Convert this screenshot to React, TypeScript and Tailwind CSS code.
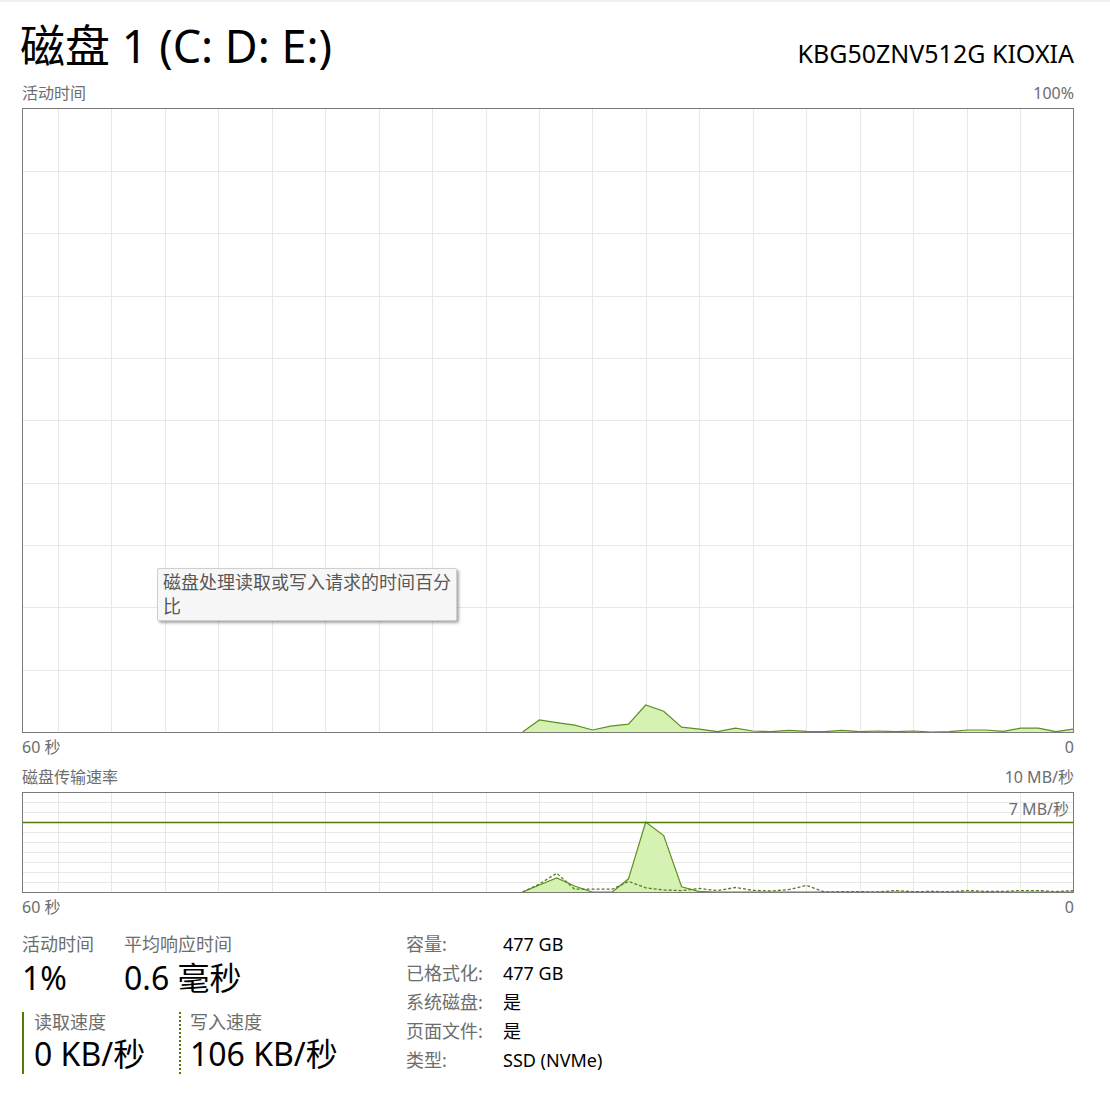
import React from "react";

type Pt = [number, number];

// x in page px, value = px above the chart floor
const activity: Pt[] = [
  [522.6, 0], [539.4, 12], [556.7, 9.3], [574.6, 6.9], [592.6, 2], [610.5, 5.9],
  [628.5, 7.9], [645.7, 27], [663.7, 20.7], [681.6, 4.8], [699.6, 2.8], [717.5, 0.3],
  [735.5, 3.8], [752.7, 1], [770.7, 0.3], [788.6, 1.7], [806.6, 0.7], [824.5, 0.3],
  [841.8, 1.7], [859.7, 0.3], [877.7, 1], [895.6, 0.3], [913.6, 1], [931.5, 0],
  [949.5, 0.3], [967.4, 2], [985.4, 2], [1003.4, 0.7], [1020.6, 3.8], [1038.5, 3.8],
  [1055.8, 0.3], [1073, 2.8],
];

const reads: Pt[] = [
  [522.6, 0], [539.5, 7], [556.7, 14], [574.6, 6], [592, 0], [612.3, 0], [628.5, 13.2],
  [645.7, 70], [663.7, 56.4], [681.6, 5.2], [698.5, 0.7], [715, 0], [1073, 0],
];

const writes: Pt[] = [
  [522.6, 0], [539.5, 8], [556.7, 18.8], [574.6, 2.8], [592, 2.8], [612.3, 2.8],
  [628.5, 10.5], [645.7, 4.2], [663.7, 2], [681.6, 1.4], [699.6, 3.5], [717.5, 1.4],
  [735.5, 4.5], [752.7, 1.7], [770.7, 1], [788.6, 2.3], [806.6, 6.6], [824.5, 0],
  [841.8, 0.3], [859.7, 0.3], [877.7, 0], [895.6, 1.4], [913.6, 0.3], [931.5, 0.6],
  [949.5, 0.3], [967.4, 1.4], [985.4, 0.6], [1003.4, 0.6], [1020.6, 1.4], [1038.5, 1.4],
  [1055.8, 0.3], [1073, 1.4],
];

const cols = Array.from({ length: 19 }, (_, i) => Math.round(1073.5 - 53.45 * (i + 1)));
const rows1 = [171, 233, 296, 358, 420, 483, 545, 607, 670];
const rows2 = [802, 812, 832, 842, 852, 862, 872, 882];

const line = (pts: Pt[], floor: number) => pts.map(([x, h]) => `${x},${floor - h}`).join(" ");
const area = (pts: Pt[], floor: number) =>
  `${pts[0][0]},${floor} ${line(pts, floor)} ${pts[pts.length - 1][0]},${floor}`;

function Grid({ top, height, rows }: { top: number; height: number; rows: number[] }) {
  return (
    <g stroke="#e8e8e8" strokeWidth="1">
      {cols.map((x) => (
        <line key={"c" + x} x1={x + 0.5} x2={x + 0.5} y1={top} y2={top + height} />
      ))}
      {rows.map((y) => (
        <line key={"r" + y} x1={23} x2={1073} y1={y + 0.5} y2={y + 0.5} />
      ))}
    </g>
  );
}

function Label({ left, right }: { left: string; right: string }) {
  return (
    <div className="flex justify-between text-[16px] leading-[20px] text-[#6d6d6d]">
      <span>{left}</span>
      <span>{right}</span>
    </div>
  );
}

function InfoRow({ k, v }: { k: string; v: string }) {
  return (
    <div className="flex leading-[29px]">
      <span className="w-[97px] text-[#6d6d6d]">{k}</span>
      <span className="text-black">{v}</span>
    </div>
  );
}

export default function App() {
  return (
    <div className="w-[1110px] min-h-[1101px] bg-white font-['Noto_Sans','Noto_Sans_CJK_SC',sans-serif]">
      <div className="h-[2px] bg-[#f0f0f0]" />
      <div className="ml-[22px] w-[1052px]">
        <div className="mt-[20px] -ml-[2px] flex items-baseline justify-between">
          <h1 className="text-[45px] leading-[48px] text-black font-normal">磁盘 1 (C: D: E:)</h1>
          <span className="text-[25px] text-black">KBG50ZNV512G KIOXIA</span>
        </div>

        <div className="mt-[10px]">
          <Label left="活动时间" right="100%" />
        </div>
        <div className="relative mt-[5px] h-[625px] border border-[#7a7a7a]">
          <svg width="1050" height="623" viewBox="23 109 1050 623" className="block">
            <Grid top={109} height={623} rows={rows1} />
            <polygon points={area(activity, 732)} fill="#d6f2b3" />
            <polyline points={line(activity, 732)} fill="none" stroke="#5f8f22" strokeWidth="1.2" />
          </svg>
          <div className="absolute left-[134px] top-[459px] w-[300px] rounded-[2px] border border-[#cfcfcf] bg-[#f7f7f7] pt-px pb-[2px] pl-[5px] pr-[3px] text-[18px] leading-[24px] text-[#575757] shadow-[2px_2px_3px_rgba(0,0,0,0.35)]">
            磁盘处理读取或写入请求的时间百分比
          </div>
        </div>
        <div className="mt-[4px]">
          <Label left="60 秒" right="0" />
        </div>

        <div className="mt-[10px]">
          <Label left="磁盘传输速率" right="10 MB/秒" />
        </div>
        <div className="relative mt-[5px] h-[101px] border border-[#7a7a7a]">
          <svg width="1050" height="99" viewBox="23 793 1050 99" className="block">
            <Grid top={793} height={99} rows={rows2} />
            <polygon points={area(reads, 892)} fill="#d6f2b3" />
            <polyline points={line(reads, 892)} fill="none" stroke="#5f8f22" strokeWidth="1.2" />
            <polyline points={line(writes, 892)} fill="none" stroke="#557f1c" strokeWidth="1.3" strokeDasharray="3 2" />
            <line x1={23} x2={1073} y1={822.5} y2={822.5} stroke="#4f7d06" strokeWidth="1.3" />
          </svg>
          <span className="absolute right-[4px] top-[6px] text-[16px] leading-[20px] text-[#6d6d6d]">7 MB/秒</span>
        </div>
        <div className="mt-[4px]">
          <Label left="60 秒" right="0" />
        </div>

        <div className="mt-[12px] flex items-start">
          <div className="w-[384px] pt-[3px]">
            <div className="flex">
              <div className="w-[102px]">
                <div className="text-[18px] leading-[24px] text-[#6d6d6d]">活动时间</div>
                <div className="mt-[4px] text-[32px] leading-[36px] text-black">1%</div>
              </div>
              <div>
                <div className="text-[18px] leading-[24px] text-[#6d6d6d]">平均响应时间</div>
                <div className="mt-[4px] text-[32px] leading-[36px] text-black">0.6 毫秒</div>
              </div>
            </div>
            <div className="mt-[16px] flex">
              <div className="w-[157px] border-l-2 border-[#4f7d06] pl-[10px]">
                <div className="text-[18px] leading-[20px] text-[#6d6d6d]">读取速度</div>
                <div className="mt-[2px] text-[32px] leading-[40px] text-black">0 KB/秒</div>
              </div>
              <div className="border-l-2 border-dotted border-[#4f7d06] pl-[9px]">
                <div className="text-[18px] leading-[20px] text-[#6d6d6d]">写入速度</div>
                <div className="mt-[2px] text-[32px] leading-[40px] text-black">106 KB/秒</div>
              </div>
            </div>
          </div>
          <div className="pt-px text-[18px]">
            <InfoRow k="容量:" v="477 GB" />
            <InfoRow k="已格式化:" v="477 GB" />
            <InfoRow k="系统磁盘:" v="是" />
            <InfoRow k="页面文件:" v="是" />
            <InfoRow k="类型:" v="SSD (NVMe)" />
          </div>
        </div>
      </div>
    </div>
  );
}
